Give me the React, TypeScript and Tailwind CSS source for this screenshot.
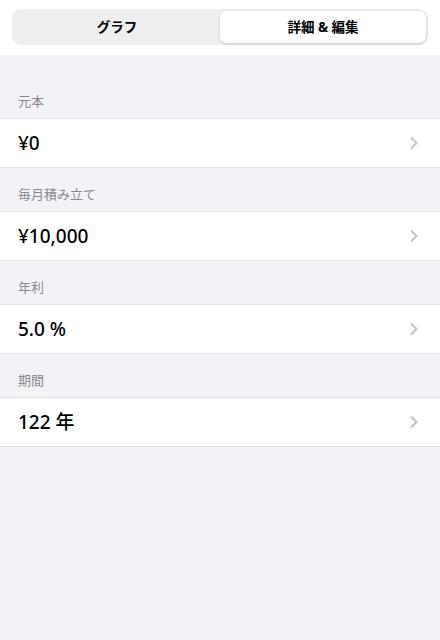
import { ChevronRight } from "lucide-react";

const ROWS = [
  { label: "元本", value: "¥0" },
  { label: "毎月積み立て", value: "¥10,000" },
  { label: "年利", value: "5.0 %" },
  { label: "期間", value: "122 年" },
];

const font = { fontFamily: '"Noto Sans", "Noto Sans CJK JP", sans-serif' };

export default function App() {
  return (
    <div className="min-h-[640px] w-[440px] bg-[#f2f2f7]" style={font}>
      <div className="h-[55px] bg-white pt-[9px] px-3">
        <div className="flex h-[36px] rounded-[9px] bg-[#eeeeef] p-[2px]">
          <button className="flex-1 text-[13.5px] font-bold text-black">グラフ</button>
          <button className="flex-1 rounded-[7px] bg-white text-[13.5px] font-bold text-black shadow-[0_1px_3px_rgba(0,0,0,0.15)]">
            詳細 &amp; 編集
          </button>
        </div>
      </div>

      <div className="pt-[20px]">
        {ROWS.map((row) => (
          <div key={row.label}>
            <div className="flex h-[43px] items-end px-[18px] pb-[9px]">
              <span className="text-[13px] leading-4 text-[#8a8a8e]">{row.label}</span>
            </div>
            <div className="flex h-[50px] items-center justify-between border-y border-[#e3e3e6] bg-white pl-[18px] pr-[16px]">
              <span className="text-[19px] font-medium text-black">{row.value}</span>
              <ChevronRight size={20} strokeWidth={2.5} className="text-[#c4c4c7]" />
            </div>
          </div>
        ))}
      </div>
    </div>
  );
}
